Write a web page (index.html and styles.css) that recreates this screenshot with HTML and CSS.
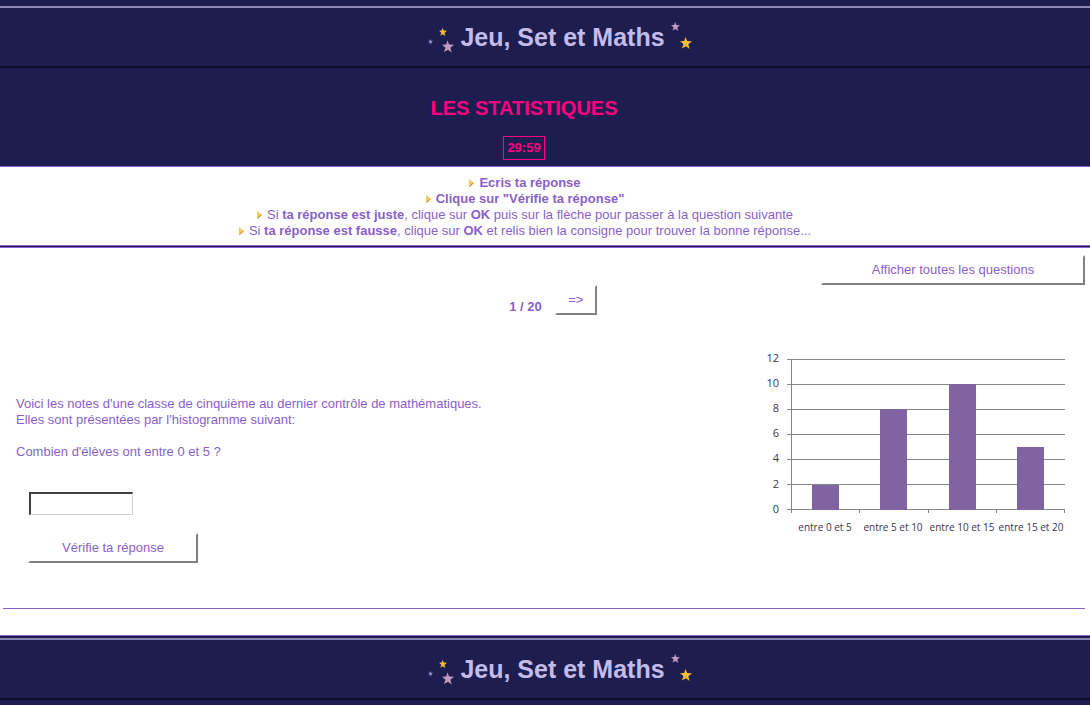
FILE: index.html
```html
<!DOCTYPE html>
<html lang="fr">
<head>
<meta charset="utf-8">
<title>Jeu, Set et Maths - Les statistiques</title>
<link rel="stylesheet" href="styles.css">
</head>
<body>
<svg class="defs" width="0" height="0" aria-hidden="true">
  <symbol id="star" viewBox="-10 -10 20 20"><path d="M-1-10 2-3.500 10-3 4 2 6 10 0 5.500-7 9-4 2-10-3-3-3.500Z"/></symbol>
  <symbol id="arrow" viewBox="0 0 5 8"><path fill="#f8c95e" d="M0 0 5 4 0 8Z"/><path fill="none" stroke="#b98218" d="M4.500 4 .5 7.500"/></symbol>
</svg>

<header class="banner">
  <div class="logo">
    <svg class="stars stars-left" viewBox="0 0 28 34" aria-hidden="true">
      <use href="#star" class="gold" x="11" y="8" width="8" height="8"/>
      <use href="#star" class="mauve" x="0" y="19" width="5" height="5"/>
      <use href="#star" class="pink" x="14" y="20" width="12" height="13"/>
    </svg>
    <span class="wordmark">Jeu, Set et Maths</span>
    <svg class="stars stars-right" viewBox="0 0 24 34" aria-hidden="true">
      <use href="#star" class="pink" x="3" y="2" width="9" height="9"/>
      <use href="#star" class="gold" x="12" y="17" width="12" height="12"/>
    </svg>
  </div>
</header>

<div class="heading">
  <h1>LES STATISTIQUES</h1>
  <div class="timer">29:59</div>
</div>

<ul class="instructions">
  <li><svg class="arrow" aria-hidden="true"><use href="#arrow"/></svg><b>Ecris ta réponse</b></li>
  <li><svg class="arrow" aria-hidden="true"><use href="#arrow"/></svg><b>Clique sur "Vérifie ta réponse"</b></li>
  <li><svg class="arrow" aria-hidden="true"><use href="#arrow"/></svg>Si <b>ta réponse est juste</b>, clique sur <b>OK</b> puis sur la flèche pour passer à la question suivante</li>
  <li><svg class="arrow" aria-hidden="true"><use href="#arrow"/></svg>Si <b>ta réponse est fausse</b>, clique sur <b>OK</b> et relis bien la consigne pour trouver la bonne réponse...</li>
</ul>

<main class="quiz">
  <button type="button" class="btn show-all">Afficher toutes les questions</button>
  <nav class="pager">
    <b>1 / 20</b>
    <button type="button" class="btn next">=&gt;</button>
  </nav>
  <div class="question">
    <form class="answer-form">
      <label for="answer">Voici les notes d'une classe de cinquième au dernier contrôle de mathématiques.<br>Elles sont présentées par l'histogramme suivant:<br><br>Combien d'élèves ont entre 0 et 5 ?</label>
      <input id="answer" class="answer" type="text">
      <button type="button" class="btn check">Vérifie ta réponse</button>
    </form>
    <svg class="chart" viewBox="0 0 320 200" role="img" aria-label="Histogramme des notes">
      <g class="axis">
        <path d="M37 19.500H315M37 44.500H315M37 69.500H315M37 94.500H315M37 119.500H315M37 144.500H315M37 169.500H315"/>
        <path d="M41.500 19V173M109.500 169V173M178.500 169V173M246.500 169V173M314.500 169V173"/>
      </g>
      <g class="bars">
        <rect x="62" y="145" width="27" height="25"/>
        <rect x="130" y="69" width="27" height="101"/>
        <rect x="199" y="44" width="27" height="126"/>
        <rect x="267" y="107" width="27" height="63"/>
      </g>
      <g class="scale">
        <text x="29" y="22">12</text>
        <text x="29" y="47">10</text>
        <text x="29" y="72">8</text>
        <text x="29" y="97">6</text>
        <text x="29" y="122">4</text>
        <text x="29" y="148">2</text>
        <text x="29" y="173">0</text>
      </g>
      <g class="ranges">
        <text x="75" y="191">entre 0 et 5</text>
        <text x="143" y="191">entre 5 et 10</text>
        <text x="212" y="191">entre 10 et 15</text>
        <text x="281" y="191">entre 15 et 20</text>
      </g>
    </svg>
  </div>
  <hr class="rule">
</main>

<footer class="banner banner-bottom">
  <div class="logo">
    <svg class="stars stars-left" viewBox="0 0 28 34" aria-hidden="true">
      <use href="#star" class="gold" x="11" y="8" width="8" height="8"/>
      <use href="#star" class="mauve" x="0" y="19" width="5" height="5"/>
      <use href="#star" class="pink" x="14" y="20" width="12" height="13"/>
    </svg>
    <span class="wordmark">Jeu, Set et Maths</span>
    <svg class="stars stars-right" viewBox="0 0 24 34" aria-hidden="true">
      <use href="#star" class="pink" x="3" y="2" width="9" height="9"/>
      <use href="#star" class="gold" x="12" y="17" width="12" height="12"/>
    </svg>
  </div>
</footer>
</body>
</html>
```

FILE: styles.css
```css
* { box-sizing: border-box; }

html { background: #1d1d50; }

body {
  margin: 0;
  background: #1d1d50;
  color: #8a5fc8;
  font: 13px/16px "Liberation Sans", Arial, sans-serif;
}

.defs { display: block; }

.banner {
  padding-top: 6px;
}

.banner-bottom {
  padding-top: 2px;
  padding-bottom: 5px;
  border-top: 1px solid #8a5fc8;
}

.logo {
  display: flex;
  justify-content: center;
  height: 62px;
  padding: 12px 0 0 30px;
  border-top: 2px solid #8e89b4;
  border-bottom: 2px solid #10102a;
}

.stars { height: 34px; }
.stars-left { width: 28px; margin-right: 4px; }
.stars-right { width: 24px; margin-left: 3px; }
.gold { fill: #f5bd3a; }
.pink { fill: #c49ac4; }
.mauve { fill: #9c90cc; }

.wordmark {
  color: #c3bce8;
  font: bold 25px/34px "Liberation Sans", Arial, sans-serif;
  white-space: nowrap;
}

.heading {
  display: flex;
  flex-direction: column;
  align-items: center;
  padding: 28px 42px 6px 0;
  border-bottom: 1px solid #8a5fc8;
  color: #ff0080;
}

.heading h1 {
  margin: 0 0 16px;
  font-size: 20px;
  line-height: 24px;
}

.timer {
  padding: 3px;
  border: 1px solid #ff0080;
  font-weight: bold;
}

.instructions {
  margin: 0;
  padding: 8px 40px 6px 0;
  background: #fff;
  border-bottom: 1px solid #8a5fc8;
  list-style: none;
  text-align: center;
}

.arrow {
  width: 5px;
  height: 8px;
  margin-right: 5px;
}

.quiz {
  display: flex;
  flex-direction: column;
  margin-top: 1px;
  padding: 7px 5px 26px 3px;
  background: #fff;
  border-top: 1px solid #8a5fc8;
}

.btn {
  height: 30px;
  padding: 0 10px 1px;
  background: #fff;
  border: 2px solid #fff;
  border-color: #fff #808080 #808080 #fff;
  color: inherit;
  font: inherit;
}

.show-all {
  align-self: flex-end;
  width: 264px;
}

.pager {
  display: flex;
  justify-content: center;
  align-items: flex-end;
  gap: 13px;
  padding-left: 18px;
}

.next { width: 42px; }

.question {
  display: flex;
  justify-content: space-between;
  align-items: flex-start;
  padding: 25px 15px 0 13px;
}

.answer-form {
  display: flex;
  flex-direction: column;
  align-items: flex-start;
  padding-top: 56px;
}

.answer {
  width: 104px;
  height: 23px;
  margin: 32px 0 18px 13px;
  background: #fff;
  border: 2px solid #404040;
  border-color: #404040 #d4d0c8 #d4d0c8 #404040;
  border-right-width: 1px;
  border-bottom-width: 1px;
  color: inherit;
  font: inherit;
}

.check {
  width: 170px;
  margin-left: 12px;
}

.chart {
  width: 320px;
  height: 200px;
}

.axis path { fill: none; stroke: #868686; }
.bars { fill: #8064a2; }
.scale, .ranges { fill: #3b3453; font-family: "Open Sans", "Noto Sans", sans-serif; }
.scale { font-size: 11px; text-anchor: end; }
.ranges { font-size: 10px; text-anchor: middle; }

.rule {
  align-self: stretch;
  margin: 45px 0 0;
  border: 0;
  border-top: 1px solid #8a5fc8;
}
```
